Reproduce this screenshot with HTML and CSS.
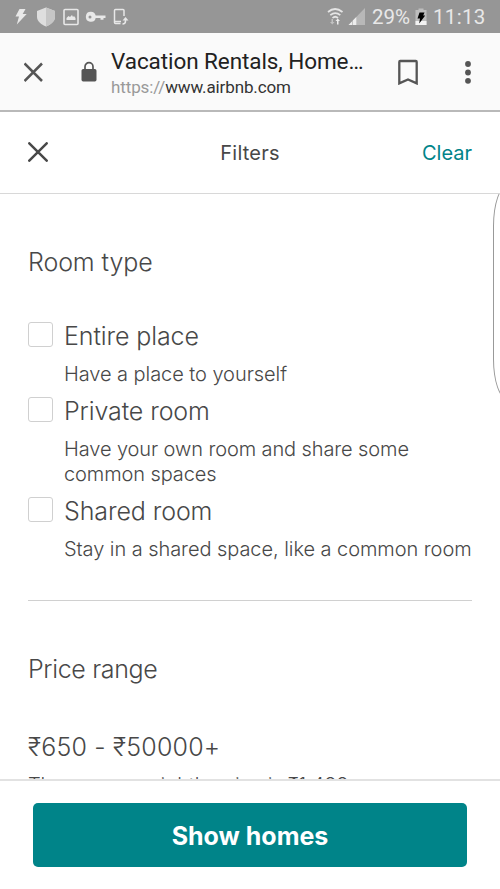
FILE: index.html
```html
<!DOCTYPE html>
<html lang="en">
<head>
<meta charset="utf-8">
<title>Vacation Rentals, Homes</title>
<link rel="stylesheet" href="styles.css">
</head>
<body>
<div class="screen">
  <div class="status">
    <svg class="status-icons" width="130" height="33" viewBox="0 0 130 33" aria-hidden="true">
      <path fill="#e8e8e8" d="M19.500 9h6l-2.800 5h4L16.800 24.500l2.200-8h-3.500z"/>
      <path fill="#dedede" d="M46 7.500 55 11v6c0 4-4 7.500-9 9.500-5-2-9-5.500-9-9.500v-6z"/>
      <path fill="#c6c6c6" d="M46 7.500 55 11v6c0 4-4 7.500-9 9.500z"/>
      <rect x="64" y="9.500" width="14" height="15" rx="1" fill="none" stroke="#e8e8e8" stroke-width="1.600"/>
      <path fill="#e8e8e8" d="M66.500 20v-2l2-2 1.500 1 2-2 1 2 1-1 1.500 2v2z"/>
      <path fill="#e8e8e8" fill-rule="evenodd" d="M91 11.800a5 5 0 1 0 4.700 6.200h4.800v1.800h3V18h2v-2.400H95.700a5 5 0 0 0-4.700-3.800zm-1 3.700a1.500 1.500 0 1 1 0 3 1.500 1.500 0 0 1 0-3z"/>
      <path d="M124 16v-5.500q0-1-1-1h-7.500q-1 0-1 1v12q0 1 1 1h5M115 21.500h6" fill="none" stroke="#e8e8e8" stroke-width="1.500"/>
      <path d="M122.500 24q3 0 3-3v-2" fill="none" stroke="#e8e8e8" stroke-width="1.500"/>
      <path fill="#e8e8e8" d="m122.500 20.500 3-3.500 3 3.500z"/>
    </svg>
    <div class="status-right">
      <svg width="39" height="33" viewBox="327 0 39 33" aria-hidden="true">
        <g fill="none" stroke="#e5e5e5" stroke-width="1.700">
          <path d="M328 12q7-6 14.500 0M330.300 15.200q5-4.300 10 0M332.500 18q2.700-2.500 5.500 0"/>
        </g>
        <path fill="#c2c2c2" d="M331.500 19h1.500v3h1.500l-2.200 2.500-2.300-2.500h1.500z"/>
        <path fill="#eee" d="M337 24.500V21h-1.500l2.300-2.500L340 21h-1.500v3.500z"/>
        <path fill="#b8b8b8" d="m348.500 25 16.500-17v17z"/>
        <path fill="#ededed" d="m348.500 25 3.500-3.500V25zM352.800 25v-4.500l3.500-3.500v8z"/>
      </svg>
      <span class="battery-text">29%</span>
      <svg class="battery" width="12" height="33" viewBox="415 0 12 33" aria-hidden="true">
        <path fill="#bdbdbd" d="M415.500 10h3V8.500h5V10h3v15h-11z"/>
        <path fill="#f2f2f2" d="M415.500 21h11v4h-11z"/>
        <path fill="#000" d="M419.500 12.500h5l-1.300 3h2l-6 8 .8-5h-2.500z"/>
      </svg>
      <span class="clock">11:13</span>
    </div>
  </div>

  <div class="browser">
    <svg class="tab-close" width="20" height="20" viewBox="0 0 20 20" aria-hidden="true"><path d="m.5 1.500 17.500 17.500M18 1.500.5 19" stroke="#555" stroke-width="2.500"/></svg>
    <svg class="lock" width="16" height="21" viewBox="0 0 16 21" aria-hidden="true"><rect x=".5" y="8" width="15" height="12.500" rx="1.700" fill="#555"/><path d="M4 8.500V5.700a4 4 0 0 1 8 0v2.800" fill="none" stroke="#555" stroke-width="1.700"/></svg>
    <div class="address">
      <div class="page-title">Vacation Rentals, Home…</div>
      <div class="url">https://<span>www.airbnb.com</span></div>
    </div>
    <svg class="bookmark" width="20" height="26" viewBox="0 0 20 26" aria-hidden="true"><path d="M2.200 2h15.600q.9 0 .9.900v21.500L10 20.500l-8.700 3.900V2.900q0-.9.900-.9z" fill="none" stroke="#555" stroke-width="2.300"/></svg>
    <svg class="menu" width="6" height="24" viewBox="0 0 6 24" fill="#555" aria-hidden="true"><circle cx="3" cy="4" r="2.900"/><circle cx="3" cy="12.500" r="2.900"/><circle cx="3" cy="20.800" r="2.900"/></svg>
  </div>

  <div class="filter-bar">
    <svg class="filter-close" width="20" height="20" viewBox="0 0 20 20" aria-hidden="true"><path d="m1.300 1.300 17.400 17.400M18.700 1.300 1.300 18.700" stroke="#484848" stroke-width="2.500" stroke-linecap="round"/></svg>
    <div class="filter-title">Filters</div>
    <div class="clear">Clear</div>
  </div>

  <main class="content">
    <h2 class="room-heading">Room type</h2>
    <div class="option">
      <span class="box"></span>
      <div><div class="name">Entire place</div><div class="desc">Have a place to yourself</div></div>
    </div>
    <div class="option">
      <span class="box"></span>
      <div><div class="name">Private room</div><div class="desc wide">Have your own room and share some<br>common spaces</div></div>
    </div>
    <div class="option">
      <span class="box"></span>
      <div><div class="name">Shared room</div><div class="desc">Stay in a shared space, like a common room</div></div>
    </div>
    <div class="rule"></div>
    <h2 class="price-heading">Price range</h2>
    <div class="price">₹650 - ₹50000+</div>
    <div class="average">The average nightly price is ₹1,488.</div>
    <div class="edge-handle"></div>
  </main>

  <div class="footer"><div class="show">Show homes</div></div>
</div>
</body>
</html>
```

FILE: styles.css
```css
* { box-sizing: border-box; }
body { margin: 0; background: #fff; }
svg { display: block; flex: none; }
.screen {
  width: 500px;
  height: 889px;
  display: flex;
  flex-direction: column;
  overflow: hidden;
  font-family: Inter, "Noto Sans", sans-serif;
  font-weight: 300;
  color: #484848;
  white-space: nowrap;
}
.status {
  height: 33px;
  flex: none;
  background: #969696;
  display: flex;
  justify-content: space-between;
  font: 400 20.5px/35px Roboto, sans-serif;
  color: #e8e8e8;
}
.status-right { display: flex; width: 173px; }
.battery-text { margin-left: 6px; width: 43px; }
.clock { margin-left: 6px; letter-spacing: .3px; }
.browser {
  height: 79px;
  flex: none;
  background: #fafafa;
  border-bottom: 2px solid #b9b9b9;
  display: flex;
  align-items: center;
  padding-left: 24px;
  font-family: Roboto, sans-serif;
  font-weight: 400;
}
.lock { margin-left: 37px; }
.address { margin-left: 14px; width: 287px; padding-top: 3px; }
.page-title { font-size: 22.5px; line-height: 28px; letter-spacing: -.08px; color: #212121; }
.url { font-size: 17px; line-height: 24px; letter-spacing: -.12px; color: #999; }
.url span { color: #333; }
.menu { margin-left: 47px; }
.filter-bar {
  height: 82px;
  flex: none;
  border-bottom: 1px solid #d8d8d8;
  padding: 0 28px;
  display: grid;
  grid-template-columns: 1fr auto 1fr;
  align-items: center;
  font-size: 20px;
  font-weight: 400;
}
.filter-close { margin-bottom: 2px; }
.filter-title { letter-spacing: .2px; }
.clear { justify-self: end; color: #008489; }
.content {
  position: relative;
  flex: 1;
  min-height: 0;
  overflow: hidden;
  padding: 52px 28px 0;
}
h2 { margin: 0; font-size: 25px; line-height: 32px; font-weight: 300; letter-spacing: -.1px; }
.room-heading { margin-bottom: 40px; }
.option { display: flex; gap: 11px; }
.box {
  width: 25px;
  height: 25px;
  flex: none;
  margin-top: 4px;
  border: 1px solid #d0d0d0;
  border-radius: 3px;
}
.name { font-size: 25px; line-height: 36px; letter-spacing: -.1px; }
.desc { font-size: 20px; line-height: 25px; padding: 8px 0 6px; letter-spacing: -.06px; }
.wide { letter-spacing: -.1px; }
.rule { height: 1px; background: #d0d0d0; margin-top: 32px; }
.price-heading { margin-top: 52px; letter-spacing: -.35px; }
.price { font-size: 25px; line-height: 32px; margin-top: 46px; letter-spacing: .2px; }
.average { font-size: 20px; line-height: 25px; margin-top: 10px; letter-spacing: -.1px; }
.edge-handle {
  position: absolute;
  top: -8px;
  left: 493px;
  width: 40px;
  height: 213px;
  border: 1px solid #999;
  border-radius: 14px / 40px;
}
.footer {
  height: 110px;
  flex: none;
  border-top: 2px solid #e2e2e2;
  padding: 22px 33px;
}
.show {
  height: 64px;
  border-radius: 5px;
  background: #008489;
  color: #fff;
  text-align: center;
  font-size: 25px;
  line-height: 66px;
  font-weight: 700;
}
```
